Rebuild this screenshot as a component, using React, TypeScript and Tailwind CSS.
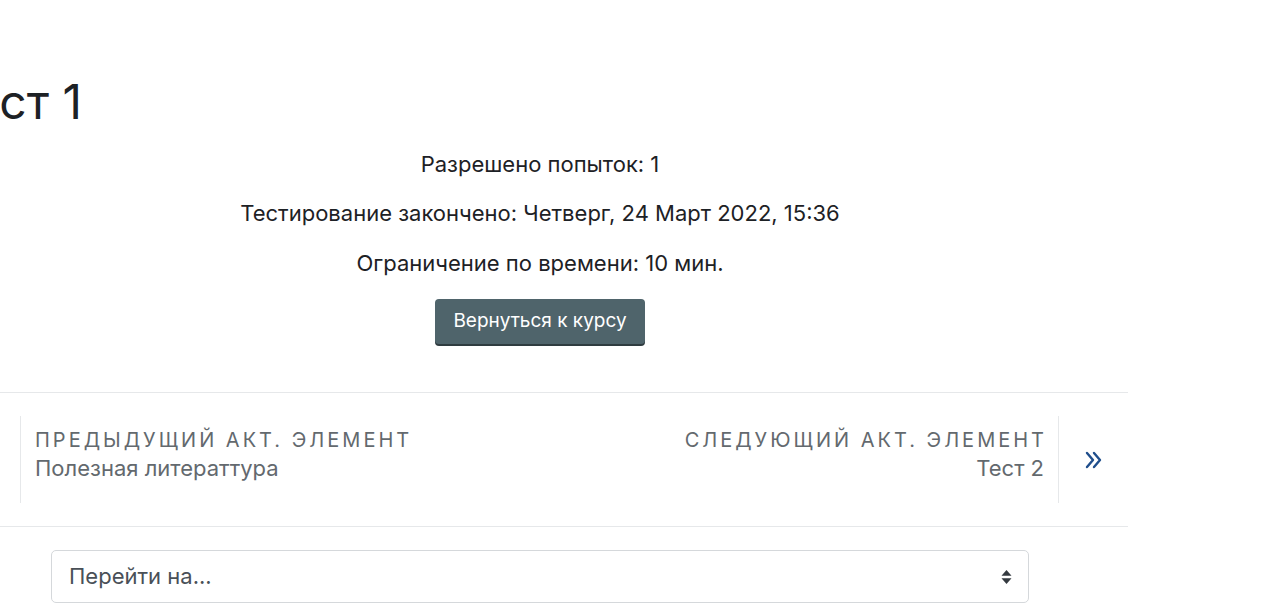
import React from "react";

export default function App() {
  return (
    <div className="w-[1280px] h-[614px] overflow-hidden bg-white" style={{ fontFamily: "Inter, 'Noto Sans', sans-serif" }}>
      <div className="ml-[-48px] w-[1176px]">
        <h1 className="ml-[-8px] pt-[74px] text-[48px] leading-[56px] text-[#1d2125] font-normal">Тест 1</h1>
        <div className="mt-[19px] flex flex-col items-center text-[22px] text-[#1d2125]">
          <p className="leading-[30px]">Разрешено попыток: 1</p>
          <p className="mt-[19px] leading-[30px]">Тестирование закончено: Четверг, 24 Март 2022, 15:36</p>
          <p className="mt-[20px] leading-[30px]">Ограничение по времени: 10 мин.</p>
          <button className="mt-[21px] h-[45px] w-[210px] rounded-[4px] bg-[#4f646b] text-[19px] text-white shadow-[0_2px_0_#2f3c40]">Вернуться к курсу</button>
        </div>
        <div className="mt-[48px] border-y border-[#e6e8ea] py-[23px] flex items-stretch h-[135px]">
          <div className="w-[69px] border-r border-[#e6e8ea]" />
          <div className="flex-1 flex justify-between items-start pt-[10px] px-[14px]">
            <div>
              <div className="text-[20px] leading-[28px] tracking-[0.15em] text-[#63696e] uppercase">Предыдущий акт. элемент</div>
              <div className="text-[22px] leading-[28px] text-[#63696e]">Полезная литераттура</div>
            </div>
            <div className="text-right">
              <div className="text-[20px] leading-[28px] tracking-[0.15em] text-[#63696e] uppercase mr-[-3px]">Следующий акт. элемент</div>
              <div className="text-[22px] leading-[28px] text-[#63696e]">Тест 2</div>
            </div>
          </div>
          <div className="w-[70px] border-l border-[#e6e8ea] flex items-center justify-center">
            <svg width="20" height="22" viewBox="0 0 20 22" fill="none" stroke="#1f4e8c" strokeWidth="2.4" strokeLinecap="round" strokeLinejoin="round">
              <path d="M3 4 L9 11 L3 18" />
              <path d="M10 4 L16 11 L10 18" />
            </svg>
          </div>
        </div>
        <div className="mt-[23px] mx-[99px] h-[53px] rounded-[5px] border border-[#d5d8db] flex items-center justify-between pl-[17px] pr-[16px]">
          <span className="text-[22px] text-[#495057]">Перейти на...</span>
          <svg width="11" height="16" viewBox="0 0 11 16">
            <path d="M5.5 1 L10.5 6.8 H0.5 Z" fill="#343a40" />
            <path d="M5.5 15 L10.5 9.2 H0.5 Z" fill="#343a40" />
          </svg>
        </div>
      </div>
    </div>
  );
}
